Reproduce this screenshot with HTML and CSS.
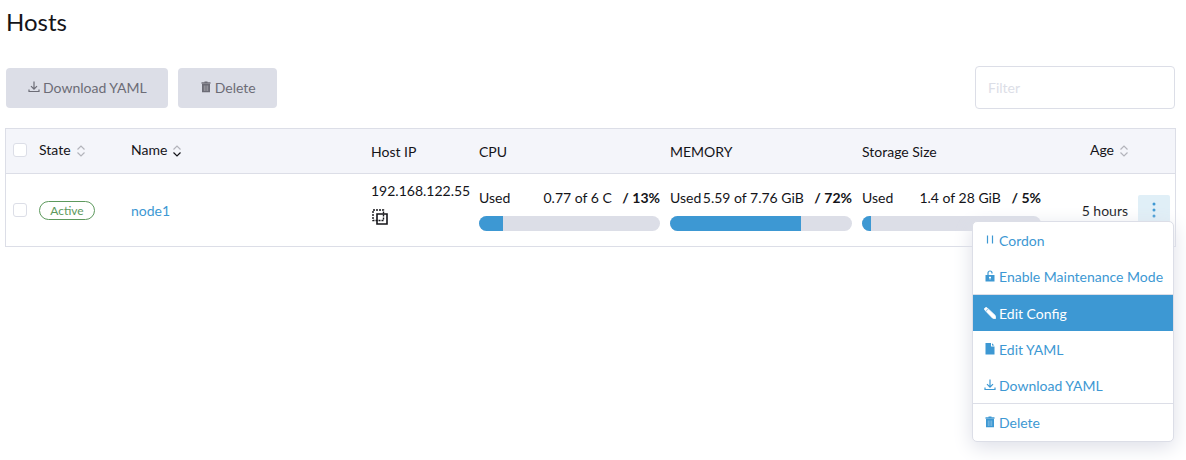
FILE: index.html
```html
<!DOCTYPE html>
<html lang="en">
<head>
<meta charset="utf-8">
<title>Hosts</title>
<link rel="stylesheet" href="styles.css">
</head>
<body>
<svg class="sprite" aria-hidden="true">
  <symbol id="download" viewBox="0 0 12 12"><path d="M6 0.500V8M3 5.200L6 8.200L9 5.200M1 8.500V10.500H11V8.500" fill="none" stroke="currentColor" stroke-width="1.200"/></symbol>
  <symbol id="trash" viewBox="0 0 12 12"><path d="M1.500 1.300H4.500V.5H7.500V1.300H10.500V2.700H1.500ZM2 3H10V11.300H2Z" fill="currentColor"/><path d="M4.300 4.500V10M6 4.500V10M7.700 4.500V10" stroke="#fff" stroke-opacity=".55" stroke-width=".6"/></symbol>
  <symbol id="pause" viewBox="0 0 12 12"><path d="M3.500 1.500V9.500M8.500 1.500V9.500" stroke="currentColor" stroke-width="1.200"/></symbol>
  <symbol id="unlock" viewBox="0 0 12 12"><path d="M4 5V3A2 2 0 0 1 8 3V3.500" fill="none" stroke="currentColor" stroke-width="1.200"/><path d="M1.500 5H10.500V11.500H1.500Z" fill="currentColor"/><path d="M6 6.500V9.500M5 7.500H7" stroke="#fff"/></symbol>
  <symbol id="pencil" viewBox="0 0 12 12"><path d="M.3 2.500Q.5 .6 2.500 .5L3.800 1.600L1.600 3.800ZM2.200 4.500L4.500 2.200L11.200 8.500L11.500 11.500L8.700 11.200Z" fill="currentColor" stroke="currentColor" stroke-width=".9" stroke-linejoin="round"/></symbol>
  <symbol id="file" viewBox="0 0 12 12"><path d="M1.500 0H7V3.500H10.500V11.500H1.500Z" fill="currentColor"/><path d="M8 .3L10.300 2.600H8Z" fill="currentColor"/></symbol>
  <symbol id="copy" viewBox="0 0 16 16"><path d="M1 1H11.500V11.500H1Z" fill="none" stroke="currentColor" stroke-width="1.400" stroke-dasharray="2 1"/><path d="M5 5H15V15H5Z" fill="none" stroke="currentColor" stroke-width="1.600"/></symbol>
  <symbol id="up" viewBox="0 0 8 5"><path d="M.5 4.500L4 1L7.500 4.500" fill="none" stroke="currentColor" stroke-width="1.200"/></symbol>
  <symbol id="down" viewBox="0 0 8 5"><path d="M.5 .5L4 4L7.500 .5" fill="none" stroke="currentColor" stroke-width="1.200"/></symbol>
</svg>
<main class="page">
  <h1 class="title">Hosts</h1>
  <div class="toolbar">
    <button class="btn" type="button" disabled><svg class="icon"><use href="#download"/></svg>Download YAML</button>
    <button class="btn" type="button" disabled><svg class="icon"><use href="#trash"/></svg>Delete</button>
    <input class="filter" type="search" placeholder="Filter" aria-label="Filter">
  </div>
  <table class="hosts">
    <colgroup>
      <col class="col-check"><col class="col-state"><col class="col-name"><col class="col-ip">
      <col class="col-cpu"><col class="col-memory"><col class="col-storage"><col class="col-age"><col class="col-action">
    </colgroup>
    <thead>
      <tr>
        <th class="check"><input class="tick" type="checkbox" aria-label="Select all hosts"></th>
        <th class="sortable">State<span class="sort"><svg><use href="#up"/></svg><svg><use href="#down"/></svg></span></th>
        <th class="sortable">Name<span class="sort"><svg><use href="#up"/></svg><svg class="on"><use href="#down"/></svg></span></th>
        <th>Host IP</th>
        <th>CPU</th>
        <th>MEMORY</th>
        <th>Storage Size</th>
        <th class="sortable right">Age<span class="sort"><svg><use href="#up"/></svg><svg><use href="#down"/></svg></span></th>
        <th></th>
      </tr>
    </thead>
    <tbody>
      <tr>
        <td class="check"><input class="tick" type="checkbox" aria-label="Select node1"></td>
        <td><span class="badge">Active</span></td>
        <td class="text"><a class="link" href="#node1">node1</a></td>
        <td><div class="ip">192.168.122.55<button class="copy" type="button" aria-label="Copy IP"><svg><use href="#copy"/></svg></button></div></td>
        <td class="meter"><div class="usage"><span>Used</span><span>0.77 of 6 C <b class="pct">/ 13%</b></span></div><div class="bar"><div class="fill" style="width:13%"></div></div></td>
        <td class="meter"><div class="usage"><span>Used</span><span>5.59 of 7.76 GiB <b class="pct">/ 72%</b></span></div><div class="bar"><div class="fill" style="width:72%"></div></div></td>
        <td class="meter"><div class="usage"><span>Used</span><span>1.4 of 28 GiB <b class="pct">/ 5%</b></span></div><div class="bar"><div class="fill" style="width:5%"></div></div></td>
        <td class="text right">5 hours</td>
        <td class="action">
          <div class="anchor">
            <button class="more" type="button" aria-label="Actions"><svg viewBox="0 0 4 16"><circle cx="2" cy="2" r="1.500"/><circle cx="2" cy="8" r="1.500"/><circle cx="2" cy="14" r="1.500"/></svg></button>
            <div class="menu">
              <button class="item" type="button"><svg class="icon"><use href="#pause"/></svg>Cordon</button>
              <button class="item" type="button"><svg class="icon"><use href="#unlock"/></svg>Enable Maintenance Mode</button>
              <hr class="rule">
              <button class="item current" type="button"><svg class="icon"><use href="#pencil"/></svg>Edit Config</button>
              <button class="item" type="button"><svg class="icon"><use href="#file"/></svg>Edit YAML</button>
              <button class="item" type="button"><svg class="icon"><use href="#download"/></svg>Download YAML</button>
              <hr class="rule">
              <button class="item" type="button"><svg class="icon"><use href="#trash"/></svg>Delete</button>
            </div>
          </div>
        </td>
      </tr>
    </tbody>
  </table>
</main>
</body>
</html>
```
FILE: styles.css
```css
* { box-sizing: border-box; }
body {
  margin: 0;
  background: #fff;
  color: #141419;
  font: 14px/20px Lato, sans-serif;
}
button, input { font: inherit; color: inherit; }
.sprite { position: absolute; width: 0; height: 0; }
.page { min-height: 100vh; padding: 7px 10px 0 5px; }
.title { margin: 0 1px 29px; font-size: 24px; line-height: 30px; font-weight: 400; }
.toolbar { display: flex; align-items: center; gap: 10px; margin: 0 1px 19px; }
.icon { width: 12px; height: 12px; flex: none; margin: 0 3px 2px 0; }
.btn {
  display: flex;
  align-items: center;
  height: 40px;
  padding: 0 21px 0 22px;
  border: 0;
  border-radius: 4px;
  background: #dcdee7;
  color: #6c6c76;
}
.filter {
  width: 200px;
  height: 43px;
  margin-left: auto;
  padding: 0 12px;
  border: 1px solid #dcdee7;
  border-radius: 4px;
  background: #fff;
}
.filter::placeholder { color: #dcdee7; opacity: 1; }
.hosts {
  width: 100%;
  table-layout: fixed;
  border-collapse: separate;
  border-spacing: 0;
  border: 1px solid #dcdee7;
}
.col-check { width: 28px; }
.col-state { width: 92px; }
.col-name { width: auto; }
.col-ip { width: 108px; }
.col-cpu { width: 191px; }
.col-memory { width: 192px; }
.col-storage { width: 189px; }
.col-age { width: 87px; }
.col-action { width: 42px; }
th, td { padding: 0 5px; text-align: left; vertical-align: middle; font-weight: 400; white-space: nowrap; }
th { height: 45px; padding-top: 2px; background: #f4f5fa; border-bottom: 1px solid #dcdee7; }
th.sortable, th.check { padding-top: 0; padding-bottom: 2px; }
td { height: 72px; }
td.meter { padding-bottom: 2px; }
td.text { padding-top: 2px; }
.check { padding: 0 0 0 7px; }
.right { text-align: right; }
.tick {
  display: block;
  appearance: none;
  width: 14px;
  height: 14px;
  margin: 0;
  border: 1px solid #dcdee7;
  border-radius: 3px;
  background: #fff;
}
.sort { display: inline-flex; flex-direction: column; gap: 2px; margin-left: 6px; vertical-align: middle; color: #b3b4bb; }
.sort svg { width: 8px; height: 5px; }
.sort .on { color: #141419; }
.badge {
  display: block;
  width: 56px;
  border: 1px solid #5d995d;
  border-radius: 10px;
  color: #5d995d;
  font-size: 12px;
  line-height: 17px;
  text-align: center;
}
.link { color: #3d98d3; text-decoration: none; }
.ip { display: flex; flex-direction: column; align-items: flex-start; gap: 8px; padding-bottom: 14px; }
.copy { padding: 0; border: 0; background: none; }
.copy svg { display: block; width: 16px; height: 16px; margin: 0 1px; }
.usage { display: flex; justify-content: space-between; margin-bottom: 8px; }
.pct { margin-left: 7px; }
.bar { height: 15px; border-radius: 8px; background: #dcdee7; overflow: hidden; }
.fill { height: 100%; background: #3d98d3; }
.anchor { position: relative; width: 32px; }
.more {
  display: flex;
  align-items: center;
  justify-content: center;
  width: 32px;
  height: 30px;
  padding: 0;
  border: 0;
  border-radius: 2px;
  background: #e0eff7;
  color: #3d98d3;
}
.more svg { width: 4px; height: 16px; fill: currentColor; }
.menu {
  position: absolute;
  top: 26px;
  right: -4px;
  z-index: 1;
  width: 202px;
  padding-bottom: 1px;
  border: 1px solid #dcdee7;
  border-radius: 5px;
  background: #fff;
  box-shadow: 0 5px 20px #dcdee7;
}
.item {
  display: flex;
  align-items: center;
  width: 100%;
  height: 36px;
  padding: 2px 10px 0 11px;
  border: 0;
  background: none;
  color: #3d98d3;
  white-space: nowrap;
}
.item.current { background: #3d98d3; color: #fff; }
.rule { height: 1px; margin: 0; border: 0; background: #dcdee7; }
```
